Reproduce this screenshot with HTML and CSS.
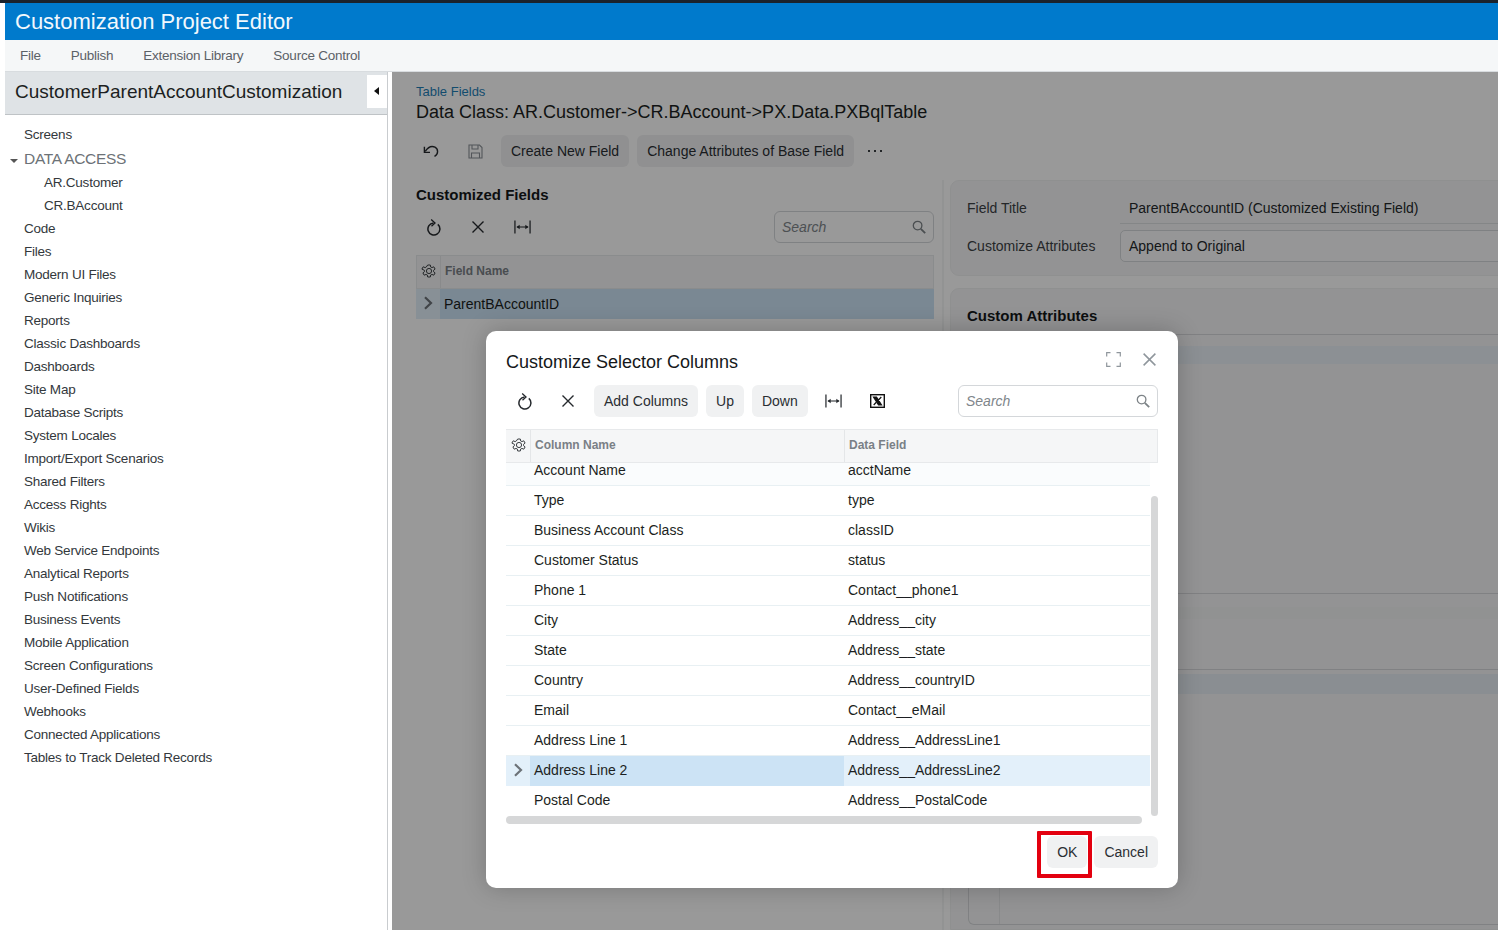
FILE: index.html
```html
<!DOCTYPE html>
<html lang="en">
<head>
<meta charset="utf-8">
<title>Customization Project Editor</title>
<link rel="stylesheet" href="styles.css">
</head>
<body>
<svg class="defs" width="0" height="0" aria-hidden="true">
  <symbol id="i-refresh" viewBox="0 0 16 18"><path d="M11.800 6.400A6 6 0 1 1 7.500 5" fill="none" stroke="currentColor" stroke-width="1.500"/><path d="M5.200 1.500 9 5 5.500 8.200" fill="none" stroke="currentColor" stroke-width="1.300"/></symbol>
  <symbol id="i-close" viewBox="0 0 14 14"><path d="M1.500 1.500 12.500 12.500M12.500 1.500 1.500 12.500" fill="none" stroke="currentColor" stroke-width="1.400"/></symbol>
  <symbol id="i-fit" viewBox="0 0 18 14"><path d="M1 0V14M17 0V14" fill="none" stroke="currentColor" stroke-width="1.300"/><path d="M3 7H15" fill="none" stroke="currentColor" stroke-width="1.100"/><path d="M2.800 7 6 4.600V9.400ZM15.200 7 12 4.600V9.400Z" fill="currentColor"/></symbol>
  <symbol id="i-search" viewBox="0 0 14 14"><circle cx="5.600" cy="5.600" r="4.300" fill="none" stroke="currentColor" stroke-width="1.300"/><path d="M8.800 8.800 13.200 13.200" fill="none" stroke="currentColor" stroke-width="1.800"/></symbol>
  <symbol id="i-gear" viewBox="0 0 16 16"><path d="M6.700 1h2.600l.4 2 1.200.6 1.900-.8 1.300 2.300-1.600 1.300v1.200l1.600 1.300-1.300 2.300-1.900-.8-1.200.6-.4 2H6.700l-.4-2-1.200-.6-1.900.8-1.300-2.300 1.600-1.300V6.400L.9 5.100l1.300-2.300 1.900.8 1.200-.6z" fill="none" stroke="currentColor" stroke-width="1"/><circle cx="8" cy="7" r="2.600" fill="none" stroke="currentColor" stroke-width="1"/></symbol>
  <symbol id="i-chev" viewBox="0 0 10 14"><path d="M2 1.200 8 7 2 12.800" fill="none" stroke="currentColor" stroke-width="2.200"/></symbol>
</svg>
<div class="app">
  <header class="titlebar">Customization Project Editor</header>
  <nav class="menu">
    <span class="menu-item">File</span>
    <span class="menu-item">Publish</span>
    <span class="menu-item">Extension Library</span>
    <span class="menu-item">Source Control</span>
  </nav>
  <div class="shell">
    <aside class="sidebar">
      <div class="side-head">
        <span class="side-title">CustomerParentAccountCustomization</span>
        <button class="collapse" aria-label="Collapse"><svg width="5" height="8" viewBox="0 0 5 8"><path d="M5 0V8L0 4Z" fill="#111"/></svg></button>
      </div>
      <ul class="tree">
        <li>Screens</li>
        <li class="group"><svg class="caret" width="8" height="4" viewBox="0 0 8 4"><path d="M0 0H8L4 4Z" fill="#555"/></svg>DATA ACCESS</li>
        <li class="sub">AR.Customer</li>
        <li class="sub">CR.BAccount</li>
        <li>Code</li>
        <li>Files</li>
        <li>Modern UI Files</li>
        <li>Generic Inquiries</li>
        <li>Reports</li>
        <li>Classic Dashboards</li>
        <li>Dashboards</li>
        <li>Site Map</li>
        <li>Database Scripts</li>
        <li>System Locales</li>
        <li>Import/Export Scenarios</li>
        <li>Shared Filters</li>
        <li>Access Rights</li>
        <li>Wikis</li>
        <li>Web Service Endpoints</li>
        <li>Analytical Reports</li>
        <li>Push Notifications</li>
        <li>Business Events</li>
        <li>Mobile Application</li>
        <li>Screen Configurations</li>
        <li>User-Defined Fields</li>
        <li>Webhooks</li>
        <li>Connected Applications</li>
        <li>Tables to Track Deleted Records</li>
      </ul>
    </aside>
    <main class="main">
      <div class="crumb">Table Fields</div>
      <h1 class="page-title">Data Class: AR.Customer-&gt;CR.BAccount-&gt;PX.Data.PXBqlTable</h1>
      <div class="toolbar page-toolbar">
        <span class="icon-btn ib-undo"><svg width="16" height="12" viewBox="0 0 16 12"><path d="M11.500 11.400C15.500 9.500 15.500 4 12 2.200 9 .8 5.500 1.500 2.200 6.400" fill="none" stroke="currentColor" stroke-width="1.400"/><path d="M1.400 1.800V7.400H7" fill="none" stroke="currentColor" stroke-width="1.400"/></svg></span>
        <span class="icon-btn ib-save"><svg width="15" height="15" viewBox="0 0 15 15"><path d="M1 1H11.500L14 3.500V14H1ZM4 1V5H10V1M3.500 14V9H11.500V14" fill="none" stroke="currentColor" stroke-width="1.100"/></svg></span>
        <span class="btn">Create New Field</span>
        <span class="btn">Change Attributes of Base Field</span>
        <span class="dots"><i></i><i></i><i></i></span>
      </div>
      <div class="columns">
        <section class="left-col">
          <h2 class="section-title">Customized Fields</h2>
          <div class="grid-tools">
            <span class="icon-btn"><svg width="16" height="18"><use href="#i-refresh"/></svg></span>
            <span class="icon-btn"><svg width="14" height="14"><use href="#i-close"/></svg></span>
            <span class="icon-btn"><svg width="17" height="14"><use href="#i-fit"/></svg></span>
            <label class="search"><span class="search-text">Search</span><svg class="search-icon" width="14" height="14"><use href="#i-search"/></svg></label>
          </div>
          <div class="grid-head">
            <span class="gear-cell"><svg width="16" height="16"><use href="#i-gear"/></svg></span>
            <span class="head-cell">Field Name</span>
          </div>
          <div class="field-row">
            <span class="chev-cell"><svg width="10" height="14"><use href="#i-chev"/></svg></span>
            <span class="field-name">ParentBAccountID</span>
          </div>
        </section>
        <div class="splitter"></div>
        <section class="right-col">
          <div class="panel props">
            <div class="prop"><span class="prop-label">Field Title</span><span class="prop-value underlined">ParentBAccountID (Customized Existing Field)</span></div>
            <div class="prop"><span class="prop-label">Customize Attributes</span><span class="prop-value boxed">Append to Original</span></div>
          </div>
          <div class="panel attrs">
            <h2 class="attrs-title">Custom Attributes</h2>
            <div class="band band-a"></div>
            <div class="attrs-spacer a"></div>
            <div class="band band-b"></div>
            <div class="attrs-spacer b"></div>
            <div class="band band-c"></div>
            <div class="inner-box"><div class="inner-col"></div></div>
          </div>
        </section>
      </div>
      <div class="overlay"></div>
      <div class="dialog" role="dialog">
        <div class="dialog-head">
          <h2 class="dialog-title">Customize Selector Columns</h2>
          <svg class="expand" width="15" height="15" viewBox="0 0 15 15"><path d="M.7 4.500V.7H4.500M10.500.7H14.300V4.500M14.300 10.500V14.300H10.500M4.500 14.300H.7V10.500" fill="none" stroke="#8f969c" stroke-width="1.200"/></svg>
          <svg class="dialog-close" width="15" height="15"><use href="#i-close"/></svg>
        </div>
        <div class="grid-tools dialog-tools">
          <span class="icon-btn"><svg width="16" height="18"><use href="#i-refresh"/></svg></span>
          <span class="icon-btn"><svg width="14" height="14"><use href="#i-close"/></svg></span>
          <span class="btn">Add Columns</span>
          <span class="btn">Up</span>
          <span class="btn">Down</span>
          <span class="icon-btn"><svg width="17" height="14"><use href="#i-fit"/></svg></span>
          <span class="icon-btn"><svg width="15" height="14" viewBox="0 0 15 14"><rect x=".7" y=".7" width="13.600" height="12.600" fill="#fff" stroke="#111" stroke-width="1.400"/><path d="M3.500 3H6.500L11.500 11H8.500ZM11.300 3 3.700 11" fill="#111" stroke="#111" stroke-width="1.200"/></svg></span>
          <label class="search"><span class="search-text">Search</span><svg class="search-icon" width="14" height="14"><use href="#i-search"/></svg></label>
        </div>
        <div class="table">
          <div class="table-head">
            <span class="gear-cell"><svg width="16" height="16"><use href="#i-gear"/></svg></span>
            <span class="head-cell name">Column Name</span>
            <span class="head-cell">Data Field</span>
          </div>
          <div class="table-body">
            <div class="rows">
              <div class="row first"><span class="c-chev"></span><span class="c-name">Account Name</span><span class="c-field">acctName</span></div>
              <div class="row"><span class="c-chev"></span><span class="c-name">Type</span><span class="c-field">type</span></div>
              <div class="row"><span class="c-chev"></span><span class="c-name">Business Account Class</span><span class="c-field">classID</span></div>
              <div class="row"><span class="c-chev"></span><span class="c-name">Customer Status</span><span class="c-field">status</span></div>
              <div class="row"><span class="c-chev"></span><span class="c-name">Phone 1</span><span class="c-field">Contact__phone1</span></div>
              <div class="row"><span class="c-chev"></span><span class="c-name">City</span><span class="c-field">Address__city</span></div>
              <div class="row"><span class="c-chev"></span><span class="c-name">State</span><span class="c-field">Address__state</span></div>
              <div class="row"><span class="c-chev"></span><span class="c-name">Country</span><span class="c-field">Address__countryID</span></div>
              <div class="row"><span class="c-chev"></span><span class="c-name">Email</span><span class="c-field">Contact__eMail</span></div>
              <div class="row"><span class="c-chev"></span><span class="c-name">Address Line 1</span><span class="c-field">Address__AddressLine1</span></div>
              <div class="row selected"><span class="c-chev"><svg width="10" height="14"><use href="#i-chev"/></svg></span><span class="c-name">Address Line 2</span><span class="c-field">Address__AddressLine2</span></div>
              <div class="row last"><span class="c-chev"></span><span class="c-name">Postal Code</span><span class="c-field">Address__PostalCode</span></div>
            </div>
            <div class="vscroll"></div>
          </div>
          <div class="hscroll"></div>
        </div>
        <div class="dialog-foot">
          <span class="btn ok-btn">OK</span>
          <span class="btn">Cancel</span>
        </div>
        <div class="highlight"></div>
      </div>
    </main>
  </div>
</div>
</body>
</html>
```
FILE: styles.css
```css
* { box-sizing: border-box; }
html, body { margin: 0; padding: 0; height: 100%; }
body { font-family: "Liberation Sans", Arial, sans-serif; font-size: 14px; color: #1a1d20; background: #fff; overflow: hidden; }
.defs { position: absolute; }
h1, h2, ul { margin: 0; padding: 0; font-weight: normal; }

.app { height: 930px; display: flex; flex-direction: column; padding-left: 5px; border-top: 3px solid #1b232c; overflow: hidden; }
.titlebar { height: 37px; flex: none; padding-left: 10px; line-height: 37px; font-size: 22px; color: #f1f8fd; background: #007acc; }
.menu { height: 32px; flex: none; display: flex; align-items: center; background: #f5f7f8; border-bottom: 1px solid #d8dcdf; }
.menu-item { padding: 0 15px; font-size: 13.500px; color: #5b6167; letter-spacing: -.25px; }
.shell { flex: 1; display: flex; min-height: 0; margin-left: -5px; }

.sidebar { width: 392px; flex: none; padding-left: 5px; position: relative; }
.sidebar::after { content: ""; position: absolute; top: 0; bottom: 0; left: 387px; width: 1px; background: #c9cccf; }
.side-head { height: 43px; width: 383px; display: flex; align-items: center; justify-content: space-between; padding-left: 10px; font-size: 19px; color: #1c1f22; background: #dfe3e6; border-bottom: 1px solid #bfc3c6; }
.side-title { margin-top: -3px; }
.collapse { width: 21px; height: 33px; margin: 0 0 4px; padding: 0 3px 0 0; border: 0; background: #fff; display: flex; align-items: center; justify-content: center; }
.tree { list-style: none; padding-top: 8px; }
.tree li { height: 23px; line-height: 23px; padding-left: 19px; font-size: 13.500px; letter-spacing: -.23px; color: #33383c; white-space: nowrap; position: relative; }
.tree .group { height: 25px; line-height: 25px; font-size: 15.500px; letter-spacing: -.3px; color: #6c7277; }
.tree .sub { padding-left: 39px; }
.caret { position: absolute; left: 5px; top: 13px; }

.main { flex: 1; min-width: 0; position: relative; padding: 12px 0 0 24px; background: #fff; overflow: hidden; display: flex; flex-direction: column; }
.crumb { height: 15px; line-height: 15px; font-size: 13px; color: #1f7fb8; }
.page-title { height: 24px; margin-top: 1px; line-height: 24px; font-size: 18px; color: #1c1f22; white-space: nowrap; }
.toolbar, .grid-tools { display: flex; align-items: center; }
.page-toolbar { height: 32px; margin-top: 11px; gap: 8px; }
.icon-btn { display: flex; align-items: center; justify-content: center; height: 32px; color: #25292d; flex: none; }
.ib-undo { width: 30px; }
.ib-save { width: 42px; margin-right: -3px; color: #8a9096; }
.btn { display: inline-flex; align-items: center; height: 32px; padding: 0 10px; font-size: 14px; color: #2a2e32; background: #f0f1f2; border-radius: 6px; white-space: nowrap; flex: none; }
.dots { display: flex; gap: 4px; margin-left: 6px; }
.dots i { width: 2px; height: 2px; background: #3a3e42; }

.columns { flex: 1; display: flex; min-height: 0; margin-top: 13px; margin-right: -12px; }
.left-col { width: 518px; flex: none; }
.section-title { height: 16px; margin-top: 7px; line-height: 16px; font-size: 15px; font-weight: bold; color: #15181a; }
.left-col .grid-tools { height: 32px; margin-top: 8px; margin-left: -4px; }
.grid-tools .icon-btn { width: 44px; }
.search { margin-left: auto; width: 160px; height: 32px; display: flex; align-items: center; justify-content: space-between; padding: 0 7px; border: 1px solid #d4d7da; border-radius: 6px; background: #fff; }
.search-text { font-style: italic; color: #80868b; font-size: 14px; }
.search-icon { color: #7d8387; }
.grid-head { height: 34px; margin-top: 12px; display: flex; background: #f5f6f7; border: 1px solid #e7e9eb; }
.gear-cell { width: 24px; flex: none; display: flex; align-items: center; justify-content: center; padding-left: 1px; color: #3c4044; border-right: 1px solid #e4e6e8; }
.head-cell { padding: 0 0 2px 4px; display: flex; align-items: center; font-size: 12px; font-weight: bold; color: #7a8086; }
.field-row { height: 30px; display: flex; align-items: center; background: #e3f0fa; }
.chev-cell { width: 24px; flex: none; display: flex; justify-content: center; padding-bottom: 2px; color: #6c7278; }
.field-name { flex: 1; height: 100%; display: flex; align-items: center; padding-left: 4px; background: #cce3f5; }
.splitter { width: 2px; flex: none; margin: 0 6px 0 8px; background: #f4f5f6; }
.right-col { flex: 1; min-width: 0; display: flex; flex-direction: column; gap: 12px; }
.panel { background: #f5f6f7; border: 1px solid #eff0f1; border-radius: 9px 0 0 0; }
.props { height: 96px; flex: none; padding: 11px 0 0 16px; border-radius: 9px 0 0 9px; }
.prop { display: flex; align-items: center; margin-bottom: 6px; }
.prop-label { width: 153px; flex: none; color: #3c4145; }
.prop-value { flex: 1; height: 32px; display: flex; align-items: center; padding-left: 9px; color: #24282b; }
.underlined { border-bottom: 1px solid #dcdfe1; }
.boxed { padding-left: 8px; border: 1px solid #d4d7da; border-radius: 5px 0 0 5px; background: #fbfbfc; }
.attrs { flex: 1; display: flex; flex-direction: column; min-height: 0; }
.attrs-title { height: 46px; padding: 18px 0 0 16px; line-height: 18px; font-size: 15px; font-weight: bold; color: #15181a; border-bottom: 1px solid #d5d8da; flex: none; }
.band { flex: none; }
.band-a { height: 18px; margin-top: 11px; background: #eaf1f7; }
.attrs-spacer.a { height: 230px; border-bottom: 1px solid #d5d8da; flex: none; }
.band-b { height: 12px; margin-top: 13px; background: #f2f3f3; }
.attrs-spacer.b { height: 51px; border-bottom: 1px solid #d5d8da; flex: none; }
.band-c { height: 20px; margin-top: 4px; background: #e6edf4; }
.inner-box { flex: 1; margin: 0 0 4px 17px; border: 1px solid #d5d8da; border-top: 0; border-radius: 0 0 0 6px; }
.inner-col { width: 31px; height: 100%; border-right: 1px solid #e4e6e8; }

.overlay { position: absolute; inset: 0; background: rgba(0, 0, 0, .4); }
.dialog { position: absolute; left: 94px; top: 259px; width: 692px; height: 557px; padding: 20px 20px 0; background: #fff; border-radius: 10px; box-shadow: 0 0 24px rgba(0, 0, 0, .22); display: flex; flex-direction: column; }
.dialog-head { height: 22px; display: flex; align-items: center; flex: none; }
.dialog-title { flex: 1; font-size: 18px; line-height: 22px; color: #15181a; }
.expand { margin-right: 21px; margin-top: -5px; }
.dialog-close { margin-right: 1px; color: #8f969c; margin-top: -5px; }
.dialog-tools { height: 32px; margin-top: 12px; gap: 8px; }
.dialog-tools .icon-btn { width: 36px; }
.dialog-tools .icon-btn:first-child { margin: 0 -1px 0 1px; }
.dialog-tools .search { width: 200px; }
.table { margin-top: 12px; width: 652px; flex: none; }
.table-head { height: 34px; display: flex; background: #f5f6f7; border: 1px solid #e7e9eb; border-left: 0; }
.table-head .gear-cell { width: 25px; padding-left: 2px; }
.head-cell.name { width: 314px; flex: none; border-right: 1px solid #e4e6e8; }
.table-body { display: flex; height: 353px; }
.rows { width: 644px; flex: none; }
.row { height: 30px; display: flex; align-items: center; color: #1c1f22; border-bottom: 1px solid #e8f0f3; }
.row.first { height: 23px; background: #fafcfd; padding-bottom: 7px; }
.row.last { border-bottom: 0; }
.row.selected { background: #e3f0fa; border-bottom: 0; }
.c-chev { width: 24px; flex: none; display: flex; justify-content: center; padding-bottom: 3px; color: #6c7278; }
.c-name { width: 314px; flex: none; height: 100%; display: flex; align-items: center; padding: 0 0 2px 4px; }
.c-field { padding: 0 0 2px 4px; }
.selected .c-name { background: #cce3f5; }
.vscroll { width: 7px; height: 320px; margin: 33px 0 0 1px; background: #d6d7d8; border-radius: 4px; }
.hscroll { width: 636px; height: 8px; background: #d6d7d8; border-radius: 4px; }
.dialog-foot { display: flex; justify-content: flex-end; gap: 7px; margin-top: 12px; flex: none; }
.highlight { position: absolute; left: 551px; top: 500px; width: 55px; height: 47px; border: 4px solid #e3000f; border-radius: 1px; }
```
